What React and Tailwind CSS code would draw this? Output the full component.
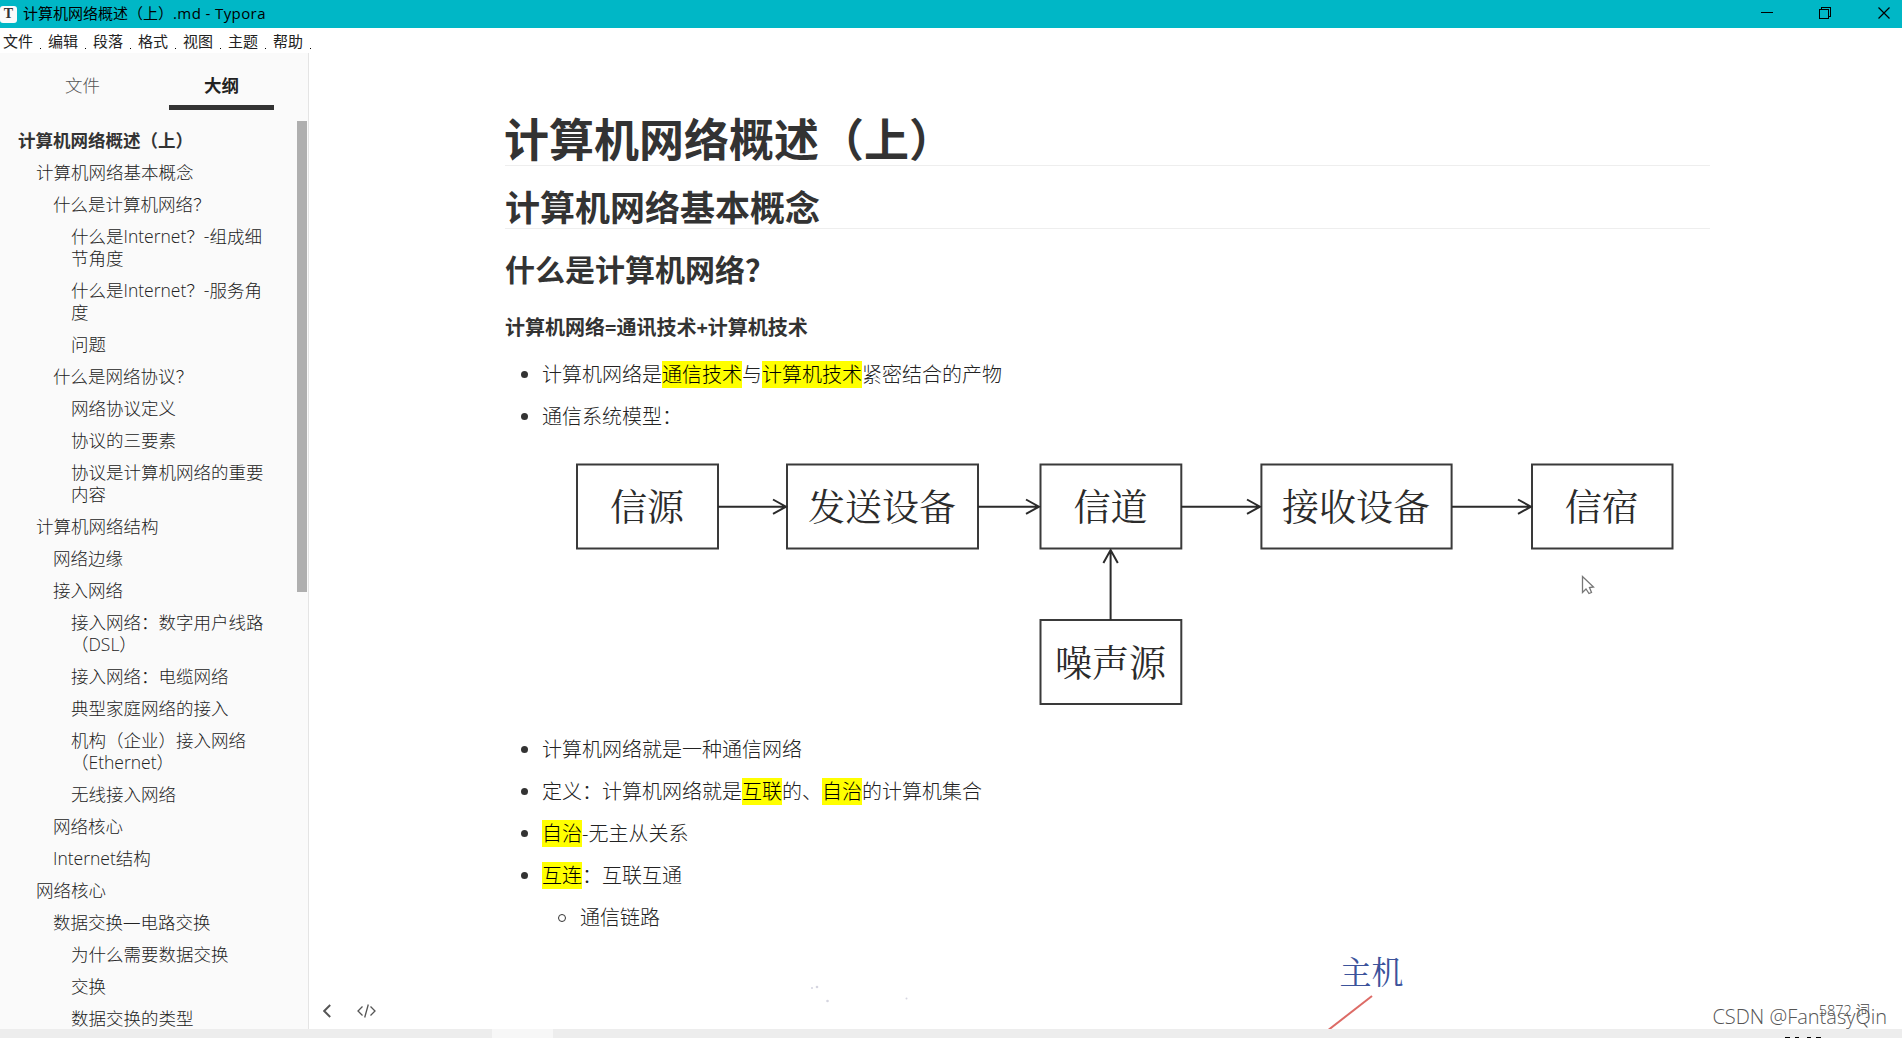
const menus = ['文件', '编辑', '段落', '格式', '视图', '主题', '帮助'];

const outline = [
  [0, ['计算机网络概述（上）']],
  [1, ['计算机网络基本概念']],
  [2, ['什么是计算机网络？']],
  [3, ['什么是Internet？-组成细', '节角度']],
  [3, ['什么是Internet？-服务角', '度']],
  [3, ['问题']],
  [2, ['什么是网络协议？']],
  [3, ['网络协议定义']],
  [3, ['协议的三要素']],
  [3, ['协议是计算机网络的重要', '内容']],
  [1, ['计算机网络结构']],
  [2, ['网络边缘']],
  [2, ['接入网络']],
  [3, ['接入网络：数字用户线路', '（DSL）']],
  [3, ['接入网络：电缆网络']],
  [3, ['典型家庭网络的接入']],
  [3, ['机构（企业）接入网络', '（Ethernet）']],
  [3, ['无线接入网络']],
  [2, ['网络核心']],
  [2, ['Internet结构']],
  [1, ['网络核心']],
  [2, ['数据交换—电路交换']],
  [3, ['为什么需要数据交换']],
  [3, ['交换']],
  [3, ['数据交换的类型']],
];

const indents = ['pl-[18px] font-bold text-[#333]', 'pl-[36px]', 'pl-[53px]', 'pl-[71px]'];

function TitleBar() {
  return (
    <header className="flex h-7 shrink-0 items-center justify-between bg-[#00b7c6] text-black">
      <div className="flex items-center">
        <div className="flex h-[17px] w-[17px] items-center justify-center rounded-[3px] bg-[#fafafa] font-['Liberation_Serif',serif] text-[14px] leading-none font-bold text-[#333]">
          T
        </div>
        <span className="ml-[6px] pb-[2px] text-[15px] leading-[26px] font-normal whitespace-pre">
          计算机网络概述（上）<span className="tracking-[0.4px]">.md - Typora</span>
        </span>
      </div>
      <svg className="h-7 w-[141px]" viewBox="0 0 141 28" fill="none" stroke="#000" shapeRendering="crispEdges">
        <path d="M0 12.5h12" />
        <path d="M58.5 9.5h9v9h-9z M60.5 9v-1.5h9v9h-1.5" />
        <path d="M117.5 7.5l11 11M128.5 7.5l-11 11" shapeRendering="auto" strokeWidth="1.2" />
      </svg>
    </header>
  );
}

function MenuBar() {
  return (
    <nav className="flex h-[25px] shrink-0 bg-white pl-[3px] text-[15px] leading-[26px] font-normal text-[#222]">
      {menus.map((m) => (
        <div key={m} className="flex w-[45px] items-end">
          <span className="h-[25px] w-[37px]">{m}</span>
          <span className="mb-1 h-px w-px bg-black" />
        </div>
      ))}
    </nav>
  );
}

function Sidebar() {
  return (
    <aside className="flex w-[309px] shrink-0 flex-col border-r border-[#e4e4e4] bg-[#fafafa] text-[#222]">
      <div className="flex h-[68px] shrink-0 pl-[30px] text-[17.5px]">
        <div className="h-[57px] w-[105px] pt-[21px] text-center leading-[22px] text-[#555]">文件</div>
        <div className="ml-[34px] h-[57px] w-[105px] border-b-[5px] border-[#333] pt-[21px] text-center leading-[22px] font-bold">
          大纲
        </div>
      </div>
      <div className="flex min-h-0 grow">
        <ul className="min-w-0 grow overflow-hidden pt-[3px] text-[17.5px] leading-[22px] whitespace-nowrap">
          {outline.map(([level, lines], i) => (
            <li key={i} className={`py-[5px] ${indents[level]}`}>
              {lines.map((l) => (
                <div key={l}>{l}</div>
              ))}
            </li>
          ))}
        </ul>
        <div className="mr-px h-[471px] w-[10px] shrink-0 bg-[#afafaf]" />
      </div>
    </aside>
  );
}

function Mark({ children }) {
  return <mark className="inline-block h-[27px] bg-[#ff0] leading-[28px] text-black">{children}</mark>;
}

function Item({ children }) {
  return (
    <li className="flex h-[42px] items-center">
      <span className="mr-[14px] ml-4 h-[7px] w-[7px] shrink-0 rounded-full bg-[#333]" />
      <span className="flex h-[27px] leading-[28px] whitespace-nowrap">{children}</span>
    </li>
  );
}

function Box({ x, y = 464.5, w, label }) {
  return (
    <g>
      <rect x={x} y={y} width={w} height="84" fill="none" stroke="#3a3a3a" strokeWidth="2" />
      <text x={x + w / 2 - 0.5} y={y + 56.5} textAnchor="middle" fill="#2b2b2b" fontSize="37">
        {label}
      </text>
    </g>
  );
}

function Arrow({ from, to }) {
  return <path d={`M${from} 506.7H${to} M${to - 13} 499.5l13 7.2l-13 7.2`} />;
}

function ModelDiagram() {
  return (
    <svg
      className="mt-[0.5px] ml-[37px] block h-[290px] w-[1168px] font-['Noto_Serif_CJK_SC','Noto_Sans_CJK_SC',serif] font-normal"
      viewBox="542 438 1168 290"
    >
      <Box x={577} w={141} label="信源" />
      <Box x={787} w={191} label="发送设备" />
      <Box x={1040.5} w={140.8} label="信道" />
      <Box x={1261.4} w={190.2} label="接收设备" />
      <Box x={1532} w={140.5} label="信宿" />
      <Box x={1040.5} y={620} w={140.8} label="噪声源" />
      <g fill="none" stroke="#2b2b2b" strokeWidth="2">
        <Arrow from={718} to={786} />
        <Arrow from={978} to={1039} />
        <Arrow from={1181} to={1260} />
        <Arrow from={1452} to={1531} />
        <path d="M1110.6 620V550M1103.4 563l7.2-13l7.2 13" />
      </g>
      <path
        d="M1582.5 576.500v16l3.500-3.500 3 4.500 2.500-1-2-5 4-.5z"
        fill="#fff"
        stroke="#777"
        strokeWidth="1.3"
      />
    </svg>
  );
}

function TopologyPicture() {
  return (
    <svg className="mt-[1.5px] ml-[37px] block h-[89px] w-[1168px]" viewBox="542 940 1168 89">
      <text x="1339.5" y="983.5" fontSize="32" fill="#3c539b" className="font-['Noto_Serif_CJK_SC','Noto_Sans_CJK_SC',serif] font-normal">
        主机
      </text>
      <path d="M1372 996L1327 1031" stroke="#dd6b66" strokeWidth="2" />
      <g fill="#d5d5e0">
        <circle cx="812" cy="988" r="1" />
        <circle cx="817" cy="987" r="1.300" />
        <circle cx="827.5" cy="1001" r="1.300" />
        <circle cx="906.500" cy="998.500" r="1" />
      </g>
    </svg>
  );
}

function Document() {
  return (
    <main className="relative min-w-0 grow overflow-hidden bg-white text-[#222]">
      <article className="ml-[196px] w-[1205px] text-[20px]">
        <h1 className="flex h-[113px] items-end border-b border-[#eee] text-[45px] leading-[50px] font-bold text-[#333]">
          <span className="-ml-px">计算机网络概述（上）</span>
        </h1>
        <h2 className="flex h-[63px] items-end border-b border-[#eee] text-[35px] leading-[41px] font-bold text-[#333]">
          计算机网络基本概念
        </h2>
        <h3 className="mt-[19px] text-[30px] leading-[44px] font-bold text-[#333]">什么是计算机网络？</h3>
        <p className="mt-[22px] mb-[11.5px] leading-[28px] font-bold text-[#333]">计算机网络=通讯技术+计算机技术</p>
        <ul>
          <Item>
            计算机网络是<Mark>通信技术</Mark>与<Mark>计算机技术</Mark>紧密结合的产物
          </Item>
          <Item>通信系统模型：</Item>
        </ul>
        <ModelDiagram />
        <ul className="pt-[0.5px]">
          <Item>计算机网络就是一种通信网络</Item>
          <Item>
            定义：计算机网络就是<Mark>互联</Mark>的、<Mark>自治</Mark>的计算机集合
          </Item>
          <Item>
            <Mark>自治</Mark>-无主从关系
          </Item>
          <Item>
            <Mark>互连</Mark>：互联互通
          </Item>
          <li className="flex h-[42px] items-center">
            <span className="mr-[14px] ml-[53px] h-2 w-2 rounded-full border border-[#333]" />
            <span className="h-[27px] leading-[28px]">通信链路</span>
          </li>
        </ul>
        <TopologyPicture />
      </article>
      <div className="absolute bottom-[11px] left-[14px] flex items-center gap-[26px] text-[#555]">
        <svg width="8" height="14" viewBox="0 0 8 14" fill="none" stroke="currentColor" strokeWidth="1.900">
          <path d="M7.200 1L1.200 7l6 6" />
        </svg>
        <svg width="19" height="14" viewBox="0 0 19 14" fill="none" stroke="currentColor" strokeWidth="1.300">
          <path d="M5.500 2.500L1 7l4.500 4.500M13.500 2.500L18 7l-4.500 4.500M11.300.500L7.700 13.500" />
        </svg>
      </div>
      <div className="absolute right-[32px] bottom-[8px] text-[14.5px] leading-5 text-[#444]">5872 词</div>
      <div className="absolute right-[15px] bottom-0 text-[20px] leading-6 whitespace-nowrap text-[#555]">CSDN @FantasyQin</div>
    </main>
  );
}

export default function App() {
  return (
    <div className="flex h-[1038px] w-[1902px] flex-col overflow-hidden bg-white font-['Open_Sans','Noto_Sans_CJK_SC',sans-serif] font-light">
      <TitleBar />
      <MenuBar />
      <div className="flex min-h-0 grow">
        <Sidebar />
        <Document />
      </div>
      <footer className="flex h-[9px] shrink-0 items-end bg-[#ededed]">
        <div className="ml-[492px] h-full w-[61px] bg-[#f7f7f7]" />
        <div className="ml-[1232px] flex h-px gap-[5px]">
          <span className="w-[5px] bg-black" />
          <span className="w-1 bg-black" />
          <span className="ml-[3px] w-1 bg-black" />
          <span className="w-[5px] bg-black" />
        </div>
      </footer>
    </div>
  );
}
